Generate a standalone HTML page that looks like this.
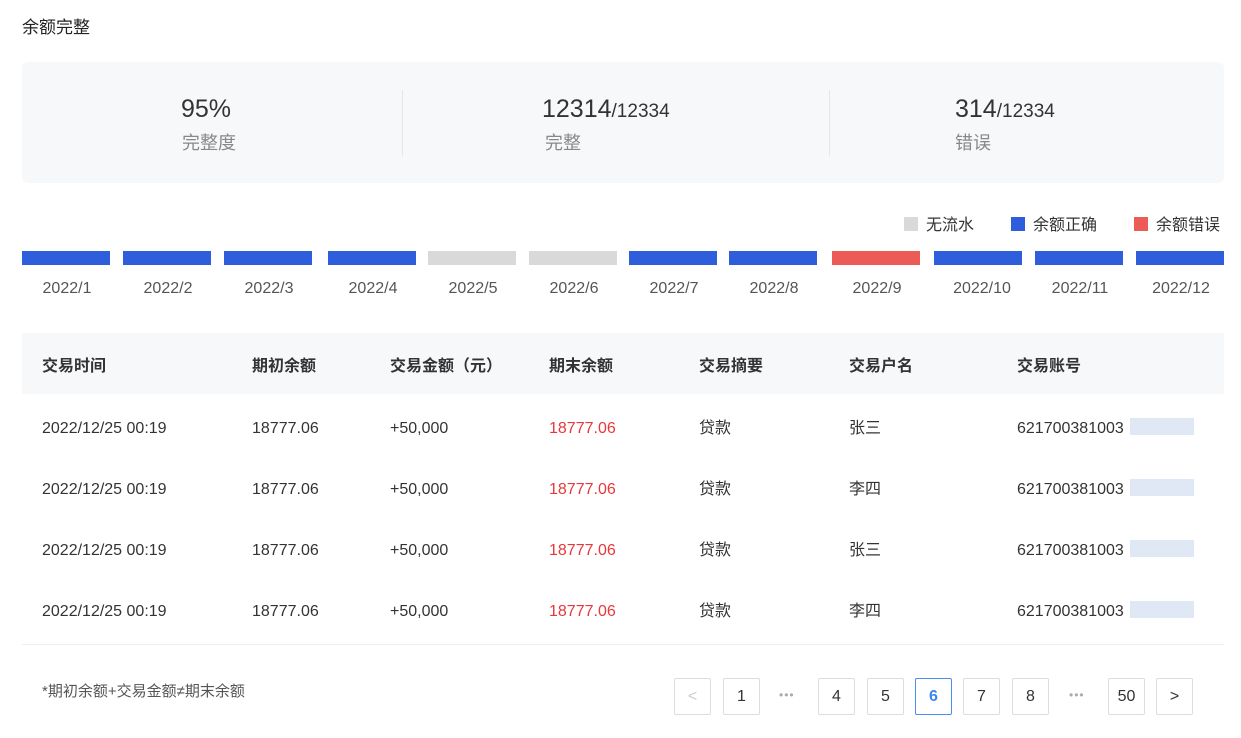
<!DOCTYPE html>
<html><head><meta charset="utf-8"><style>
*{margin:0;padding:0;box-sizing:border-box}
body{width:1241px;height:738px;background:#fff;font-family:"Liberation Sans","Noto Sans CJK SC",sans-serif;color:#333;position:relative;overflow:hidden}
.a{position:absolute;white-space:nowrap}
.bar{position:absolute;top:251px;height:14px;width:88px}
.ml{position:absolute;top:279px;font-size:16px;line-height:20px;color:#555;width:100px;text-align:center}
.th{position:absolute;top:357px;font-size:16px;line-height:20px;font-weight:bold;color:#333}
.td{position:absolute;top:2px;font-size:16px;line-height:20px;color:#333}
.pg{position:absolute;top:678px;height:37px;width:37px;border:1px solid #ddd;border-radius:2px;font-size:16px;text-align:center;line-height:35px;color:#333;background:#fff}
.dots{position:absolute;top:688px;font-size:12px;color:#aaa;letter-spacing:1px}
</style></head><body>
<div class="a" style="left:22px;top:18px;font-size:17px;line-height:20px;color:#222">余额完整</div>
<div class="a" style="left:22px;top:62px;width:1202px;height:121px;background:#f7f8fa;border-radius:6px"></div>
<div class="a" style="left:402px;top:90px;width:1px;height:66px;background:#e6e6e6"></div>
<div class="a" style="left:829px;top:90px;width:1px;height:66px;background:#e6e6e6"></div>
<div class="a" style="left:181px;top:94px;font-size:25px;line-height:30px;color:#333">95%</div>
<div class="a" style="left:182px;top:132px;font-size:18px;line-height:22px;color:#888">完整度</div>
<div class="a" style="left:542px;top:94px;font-size:25px;line-height:30px;color:#333">12314<span style="font-size:19px">/12334</span></div>
<div class="a" style="left:545px;top:132px;font-size:18px;line-height:22px;color:#888">完整</div>
<div class="a" style="left:955px;top:94px;font-size:25px;line-height:30px;color:#333">314<span style="font-size:19px">/12334</span></div>
<div class="a" style="left:955px;top:132px;font-size:18px;line-height:22px;color:#888">错误</div>

<div class="a" style="left:904px;top:217px;width:14px;height:14px;background:#d9d9d9"></div>
<div class="a" style="left:926px;top:216px;font-size:16px;line-height:20px">无流水</div>
<div class="a" style="left:1011px;top:217px;width:14px;height:14px;background:#2e5edc"></div>
<div class="a" style="left:1033px;top:216px;font-size:16px;line-height:20px">余额正确</div>
<div class="a" style="left:1134px;top:217px;width:14px;height:14px;background:#ec5b56"></div>
<div class="a" style="left:1156px;top:216px;font-size:16px;line-height:20px">余额错误</div>

<div class="bar" style="left:22px;background:#2e5edc"></div>
<div class="bar" style="left:123px;background:#2e5edc"></div>
<div class="bar" style="left:224px;background:#2e5edc"></div>
<div class="bar" style="left:328px;background:#2e5edc"></div>
<div class="bar" style="left:428px;background:#d9d9d9"></div>
<div class="bar" style="left:529px;background:#d9d9d9"></div>
<div class="bar" style="left:629px;background:#2e5edc"></div>
<div class="bar" style="left:729px;background:#2e5edc"></div>
<div class="bar" style="left:832px;background:#ec5b56"></div>
<div class="bar" style="left:934px;background:#2e5edc"></div>
<div class="bar" style="left:1035px;background:#2e5edc"></div>
<div class="bar" style="left:1136px;background:#2e5edc"></div>
<div class="ml" style="left:17px">2022/1</div>
<div class="ml" style="left:118px">2022/2</div>
<div class="ml" style="left:219px">2022/3</div>
<div class="ml" style="left:323px">2022/4</div>
<div class="ml" style="left:423px">2022/5</div>
<div class="ml" style="left:524px">2022/6</div>
<div class="ml" style="left:624px">2022/7</div>
<div class="ml" style="left:724px">2022/8</div>
<div class="ml" style="left:827px">2022/9</div>
<div class="ml" style="left:932px">2022/10</div>
<div class="ml" style="left:1030px">2022/11</div>
<div class="ml" style="left:1131px">2022/12</div>

<div class="a" style="left:22px;top:333px;width:1202px;height:61px;background:#f7f8fa"></div>
<div class="th" style="left:42px">交易时间</div>
<div class="th" style="left:252px">期初余额</div>
<div class="th" style="left:390px">交易金额（元）</div>
<div class="th" style="left:549px">期末余额</div>
<div class="th" style="left:699px">交易摘要</div>
<div class="th" style="left:849px">交易户名</div>
<div class="th" style="left:1017px">交易账号</div>

<div class="a" style="left:0;top:417px;width:1241px">
<div class="td" style="left:42px">2022/12/25 00:19</div><div class="td" style="left:252px">18777.06</div><div class="td" style="left:390px">+50,000</div><div class="td" style="left:549px;color:#e8373a">18777.06</div><div class="td" style="left:699px">贷款</div><div class="td" style="left:849px">张三</div><div class="td" style="left:1017px">621700381003</div><div class="a" style="left:1130px;top:1px;width:64px;height:17px;background:#dfe8f4"></div>
</div>
<div class="a" style="left:0;top:478px;width:1241px">
<div class="td" style="left:42px">2022/12/25 00:19</div><div class="td" style="left:252px">18777.06</div><div class="td" style="left:390px">+50,000</div><div class="td" style="left:549px;color:#e8373a">18777.06</div><div class="td" style="left:699px">贷款</div><div class="td" style="left:849px">李四</div><div class="td" style="left:1017px">621700381003</div><div class="a" style="left:1130px;top:1px;width:64px;height:17px;background:#dfe8f4"></div>
</div>
<div class="a" style="left:0;top:539px;width:1241px">
<div class="td" style="left:42px">2022/12/25 00:19</div><div class="td" style="left:252px">18777.06</div><div class="td" style="left:390px">+50,000</div><div class="td" style="left:549px;color:#e8373a">18777.06</div><div class="td" style="left:699px">贷款</div><div class="td" style="left:849px">张三</div><div class="td" style="left:1017px">621700381003</div><div class="a" style="left:1130px;top:1px;width:64px;height:17px;background:#dfe8f4"></div>
</div>
<div class="a" style="left:0;top:600px;width:1241px">
<div class="td" style="left:42px">2022/12/25 00:19</div><div class="td" style="left:252px">18777.06</div><div class="td" style="left:390px">+50,000</div><div class="td" style="left:549px;color:#e8373a">18777.06</div><div class="td" style="left:699px">贷款</div><div class="td" style="left:849px">李四</div><div class="td" style="left:1017px">621700381003</div><div class="a" style="left:1130px;top:1px;width:64px;height:17px;background:#dfe8f4"></div>
</div>
<div class="a" style="left:22px;top:644px;width:1202px;height:1px;background:#eee"></div>

<div class="a" style="left:42px;top:682px;font-size:15px;line-height:20px;color:#555">*期初余额+交易金额≠期末余额</div>
<div class="pg" style="left:674px;color:#ccc">&lt;</div>
<div class="pg" style="left:723px">1</div>
<div class="dots" style="left:779px">•••</div>
<div class="pg" style="left:818px">4</div>
<div class="pg" style="left:867px">5</div>
<div class="pg" style="left:915px;border-color:#4a8df0;color:#3a85f0;font-weight:bold">6</div>
<div class="pg" style="left:963px">7</div>
<div class="pg" style="left:1012px">8</div>
<div class="dots" style="left:1069px">•••</div>
<div class="pg" style="left:1108px">50</div>
<div class="pg" style="left:1156px">&gt;</div>
</body></html>
